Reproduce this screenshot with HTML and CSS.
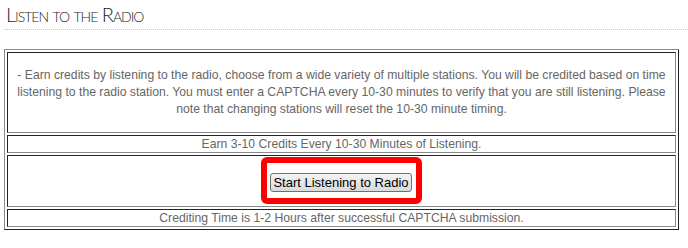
FILE: index.html
```html
<!DOCTYPE HTML>
<html>
    <head>
        <title>Listen to the Radio</title>
        <link rel="stylesheet" href="styles.css">
    </head>
    <body>
        <div class="page">
            <h1 class="page-title">Listen to the Radio</h1>

            <table class="radio-table">
                <tr>
                    <td class="intro">
                        - Earn credits by listening to the radio, choose from a wide variety of multiple stations. You will be credited based on time<br>
                        listening to the radio station. You must enter a CAPTCHA every 10-30 minutes to verify that you are still listening. Please<br>
                        note that changing stations will reset the 10-30 minute timing.
                    </td>
                </tr>
                <tr>
                    <td class="note">Earn 3-10 Credits Every 10-30 Minutes of Listening.</td>
                </tr>
                <tr>
                    <td class="action">
                        <div class="highlight">
                            <button class="start-button" type="button">Start Listening to Radio</button>
                        </div>
                    </td>
                </tr>
                <tr>
                    <td class="note">Crediting Time is 1-2 Hours after successful CAPTCHA submission.</td>
                </tr>
            </table>
        </div>
    </body>
</html>
```

FILE: styles.css
```css
body {
    margin: 0;
    background-color: #ffffff;
    font-family: "Liberation Sans", Arial, sans-serif;
}
.page {
    padding-left: 4px;
}
.page-title {
    margin: 0;
    padding: 1px 0 2px 2px;
    font-family: Lato, "Open Sans", sans-serif;
    font-weight: 300;
    font-size: 20px;
    line-height: 26px;
    letter-spacing: -1px;
    font-variant: small-caps;
    color: #1e1e1e;
    border-bottom: 1px dotted #c8c8c8;
}
.radio-table {
    width: 675px;
    margin-top: 19px;
    border-collapse: separate;
    border-spacing: 2px;
    border: 1px solid;
    border-color: #8a8a8a #222222 #222222 #8a8a8a;
}
.radio-table td {
    border: 1px solid;
    border-color: #222222 #8a8a8a #8a8a8a #222222;
    text-align: center;
    color: #666666;
    font-size: 12.2px;
}
.intro {
    padding: 14px 4px;
    line-height: 17px;
}
.note {
    padding: 0 4px;
    line-height: 16px;
}
.action {
    padding: 1px 1px 2px;
    line-height: 0;
}
.highlight {
    display: inline-block;
    padding: 10px 4px 6px 3px;
    border: 6px solid #ff0000;
    border-radius: 6px;
    line-height: normal;
}
.start-button {
    display: block;
    padding: 1px 2px;
    font-family: "Liberation Sans", Arial, sans-serif;
    font-size: 13px;
    line-height: 15px;
    color: #000000;
    background: linear-gradient(#f4f4f4, #e6e6e6 50%, #dadada);
    border: 1px solid #707070;
    border-radius: 3px;
}
```
